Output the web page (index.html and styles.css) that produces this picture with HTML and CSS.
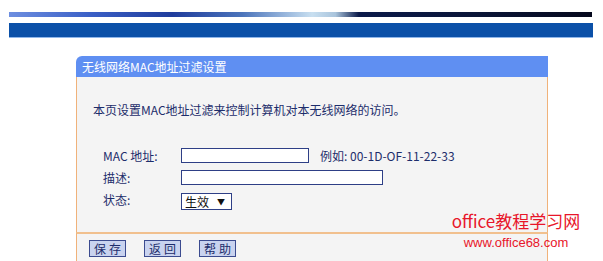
FILE: index.html
```html
<!DOCTYPE html>
<html lang="zh">
<head>
<meta charset="utf-8">
<link rel="stylesheet" href="styles.css">
</head>
<body>
<div class="top-strip"></div>
<div class="blue-bar"></div>
<div class="panel">
  <div class="panel-head">无线网络MAC地址过滤设置</div>
  <div class="panel-body">
    <p class="desc">本页设置MAC地址过滤来控制计算机对本无线网络的访问。</p>
    <div class="form">
      <div class="row">
        <span class="label">MAC 地址:</span>
        <span class="input short"></span>
        <span class="hint">例如: 00-1D-OF-11-22-33</span>
      </div>
      <div class="row">
        <span class="label">描述:</span>
        <span class="input long"></span>
      </div>
      <div class="row">
        <span class="label">状态:</span>
        <span class="select">生效 <span class="arrow">▼</span></span>
      </div>
    </div>
  </div>
  <div class="panel-foot">
    <span class="btn">保存</span>
    <span class="btn">返回</span>
    <span class="btn">帮助</span>
  </div>
  <div class="watermark">
    <div class="wm-title">office教程学习网</div>
    <div class="wm-url">www.office68.com</div>
  </div>
</div>
</body>
</html>
```
FILE: styles.css
```css
html, body {
  margin: 0;
  padding: 0;
  background: #ffffff;
  overflow: hidden;
  height: 261px;
}
body {
  font-family: "Noto Sans CJK SC", "DejaVu Sans", sans-serif;
  font-size: 12px;
  color: #1d2d6b;
}
.top-strip {
  margin: 12px 11px 0 9px;
  height: 5px;
  background: linear-gradient(90deg, #6d8ee0 0%, #3a5fc6 14%, #1f3c9c 28%, #4b74bb 40%, #c8dff0 52%, #a9c4dc 56%, #0b1a4a 60%, #0a1538 80%, #05081c 100%);
}
.blue-bar {
  margin: 6px 10px 0 9px;
  height: 14px;
  background: #0b50a8;
  border-bottom: 1px solid #8fb6ea;
}
.panel {
  position: relative;
  margin: 18px 0 0 76px;
  width: 472px;
}
.panel-head {
  height: 21px;
  line-height: 21px;
  background: #5f8ff2;
  color: #ffffff;
  padding-left: 6px;
  border-radius: 6px 0 0 0;
  font-size: 12px;
}
.panel-body {
  background: #f4f4f4;
  border-left: 1px solid #f0b27a;
  border-right: 1px solid #f0b27a;
  height: 155px;
  padding: 0 0 0 16px;
  overflow: hidden;
}
.desc {
  margin: 24px 0 0 0;
  line-height: 18px;
}
.form {
  margin-top: 28px;
  padding-left: 10px;
  display: flex;
  flex-direction: column;
  gap: 6px;
}
.row {
  display: flex;
  align-items: center;
  height: 16px;
}
.label {
  width: 78px;
}
.input {
  height: 13px;
  background: #ffffff;
  border: 1px solid #2e3f86;
  box-sizing: content-box;
}
.input.short { width: 126px; }
.input.long { width: 200px; }
.hint {
  margin-left: 11px;
}
.select {
  height: 15px;
  width: 46px;
  line-height: 15px;
  background: #ffffff;
  border: 1px solid #2e3f86;
  color: #111;
  padding-left: 3px;
  box-sizing: content-box;
  display: flex;
  align-items: center;
  gap: 8px;
  margin-top: 4px;
}
.arrow {
  font-size: 8px;
}
.panel-foot {
  border-top: 2px solid #f1c08e;
  border-left: 1px solid #f0b27a;
  border-right: 1px solid #f0b27a;
  background: #f4f4f4;
  height: 30px;
  display: flex;
  align-items: flex-start;
  gap: 18px;
  padding: 6px 0 0 12px;
}
.btn {
  display: inline-block;
  width: 35px;
  height: 15px;
  line-height: 15px;
  text-align: center;
  background: #c9d3ef;
  border: 1px solid #3b4b8f;
  color: #1d2d6b;
  letter-spacing: 3px;
  text-indent: 3px;
}
.watermark {
  position: absolute;
  left: 370px;
  top: 154px;
  width: 140px;
  color: #e8162a;
  text-align: center;
  white-space: nowrap;
  font-family: "Noto Sans CJK SC", "Liberation Sans", sans-serif;
}
.wm-title {
  font-size: 17px;
  line-height: 22px;
}
.wm-url {
  font-family: "Liberation Sans", "Noto Sans CJK SC", sans-serif;
  font-size: 13px;
  line-height: 16px;
  margin-top: 3px;
}
```
